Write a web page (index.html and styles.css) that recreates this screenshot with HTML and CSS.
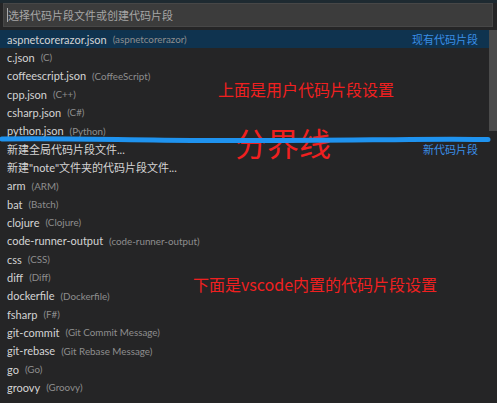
FILE: index.html
```html
<!DOCTYPE html>
<html lang="zh">
<head>
<meta charset="utf-8">
<link rel="stylesheet" href="styles.css">
</head>
<body>
<div class="widget">
  <div class="input-wrap">
    <div class="input"><span class="cursor"></span><span class="placeholder">选择代码片段文件或创建代码片段</span></div>
  </div>
  <div class="list">
    <div class="row selected"><span class="label">aspnetcorerazor.json</span><span class="desc">(aspnetcorerazor)</span><span class="group">现有代码片段</span></div>
    <div class="row"><span class="label">c.json</span><span class="desc">(C)</span></div>
    <div class="row"><span class="label">coffeescript.json</span><span class="desc">(CoffeeScript)</span></div>
    <div class="row"><span class="label">cpp.json</span><span class="desc">(C++)</span></div>
    <div class="row"><span class="label">csharp.json</span><span class="desc">(C#)</span></div>
    <div class="row"><span class="label">python.json</span><span class="desc">(Python)</span></div>
    <div class="row"><span class="label">新建全局代码片段文件...</span><span class="group">新代码片段</span></div>
    <div class="row"><span class="label">新建"note"文件夹的代码片段文件...</span></div>
    <div class="row"><span class="label">arm</span><span class="desc">(ARM)</span></div>
    <div class="row"><span class="label">bat</span><span class="desc">(Batch)</span></div>
    <div class="row"><span class="label">clojure</span><span class="desc">(Clojure)</span></div>
    <div class="row"><span class="label">code-runner-output</span><span class="desc">(code-runner-output)</span></div>
    <div class="row"><span class="label">css</span><span class="desc">(CSS)</span></div>
    <div class="row"><span class="label">diff</span><span class="desc">(Diff)</span></div>
    <div class="row"><span class="label">dockerfile</span><span class="desc">(Dockerfile)</span></div>
    <div class="row"><span class="label">fsharp</span><span class="desc">(F#)</span></div>
    <div class="row"><span class="label">git-commit</span><span class="desc">(Git Commit Message)</span></div>
    <div class="row"><span class="label">git-rebase</span><span class="desc">(Git Rebase Message)</span></div>
    <div class="row"><span class="label">go</span><span class="desc">(Go)</span></div>
    <div class="row"><span class="label">groovy</span><span class="desc">(Groovy)</span></div>
  </div>
  <div class="scrollbar"></div>
  <div class="note note-top">上面是用户代码片段设置</div>
  <div class="note note-divider">分界线</div>
  <div class="note note-bottom">下面是vscode内置的代码片段设置</div>
  <svg class="stroke" width="497" height="12" viewBox="0 0 497 12">
    <path d="M2 5 C 60 4, 120 6, 200 6.5 S 350 6, 410 5.5 S 470 5.5, 488 5.5" fill="none" stroke="#1f93ef" stroke-width="5" stroke-linecap="round"/>
  </svg>
</div>
</body>
</html>
```

FILE: styles.css
```css
html, body {
  margin: 0;
  padding: 0;
  background: #252526;
}
body {
  width: 497px;
  height: 403px;
  overflow: hidden;
  font-family: Lato, "Noto Sans CJK SC", sans-serif;
}
.widget {
  position: relative;
  width: 497px;
  height: 403px;
  background: #252526;
  border-top: 3px solid #1e2a31;
  box-sizing: border-box;
}
.input-wrap {
  padding: 0 4px 3px 3px;
}
.input {
  height: 24px;
  background: #3c3c3c;
  border: 1px solid #474747;
  box-sizing: border-box;
  display: flex;
  align-items: center;
  padding-left: 3px;
}
.cursor {
  width: 1px;
  height: 14px;
  background: #aaa;
}
.placeholder {
  color: #a6a6a6;
  font-size: 11px;
  font-family: "Noto Sans CJK SC", sans-serif;
}
.list {
  display: flex;
  flex-direction: column;
}
.row {
  height: 18.33px;
  display: flex;
  align-items: center;
  padding: 0 19px 0 7px;
  white-space: nowrap;
}
.row.selected {
  background: #0f334f;
}
.label {
  color: #d4d4d4;
  font-size: 11px;
}
.desc {
  color: #8e8e8e;
  font-size: 9.8px;
  margin-left: 6px;
}
.group {
  margin-left: auto;
  color: #3a8ee6;
  font-size: 11px;
  font-family: "Noto Sans CJK SC", sans-serif;
}
.scrollbar {
  position: absolute;
  top: 27px;
  right: 0;
  width: 8px;
  height: 101px;
  background: #4b4b4b;
}
.note {
  position: absolute;
  color: #f02020;
  font-family: "Noto Sans CJK SC", sans-serif;
  white-space: nowrap;
}
.note-top {
  left: 218px;
  top: 74px;
  font-size: 16px;
}
.note-divider {
  left: 235px;
  top: 119px;
  font-size: 32px;
  line-height: 40px;
}
.note-bottom {
  left: 193px;
  top: 269px;
  font-size: 16px;
}
.stroke {
  position: absolute;
  left: 0;
  top: 131px;
}
```
